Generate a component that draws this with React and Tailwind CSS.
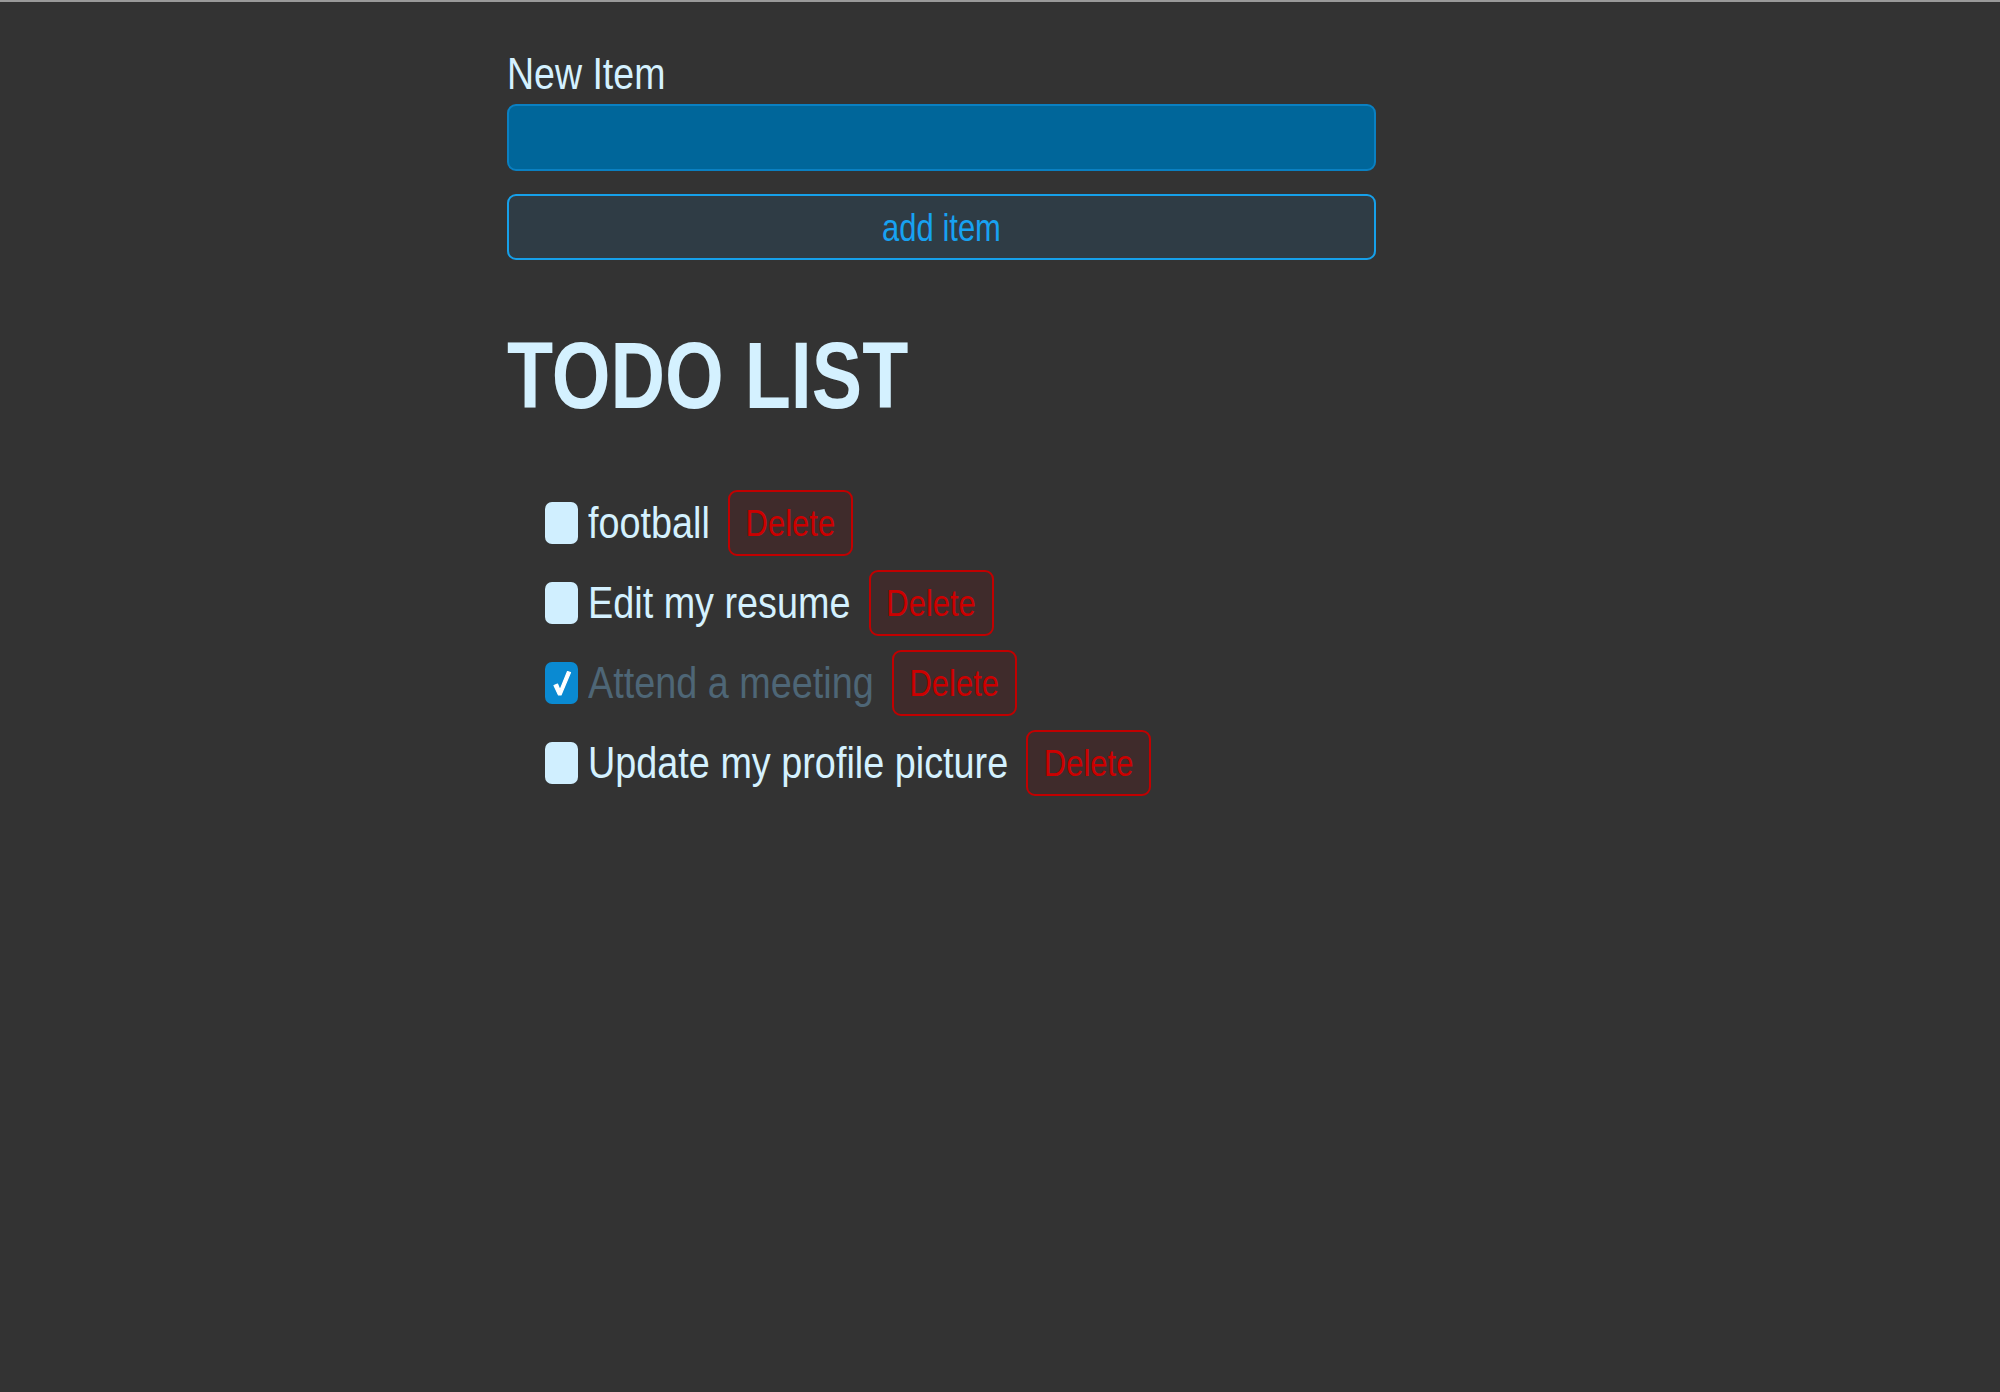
import { useState } from 'react';

const font = { fontFamily: '"Liberation Sans", Arial, sans-serif' };

const initialItems = [
    { id: 1, text: 'football', done: false },
    { id: 2, text: 'Edit my resume', done: false },
    { id: 3, text: 'Attend a meeting', done: true },
    { id: 4, text: 'Update my profile picture', done: false },
];

const App = () => {
    const [items, setItems] = useState(initialItems);
    const [newItem, setNewItem] = useState('');

    const addItem = () => {
        if (!newItem.trim()) return;
        setItems([...items, { id: Date.now(), text: newItem, done: false }]);
        setNewItem('');
    };

    const toggle = (id) => {
        setItems(items.map((it) => (it.id === id ? { ...it, done: !it.done } : it)));
    };

    const remove = (id) => {
        setItems(items.filter((it) => it.id !== id));
    };

    return (
        <div
            className="min-h-screen bg-[#333333] border-t-2 border-[#9a9a9a] pt-[45px] pl-[507px]"
            style={font}
        >
            <div className="w-[869px]">
                {/* New item form */}
                <label className="block text-[37.5px] leading-[52px] text-[#d4f1ff] mb-[5px] scale-y-[1.2]">New Item</label>
                <input
                    type="text"
                    value={newItem}
                    onChange={(e) => setNewItem(e.target.value)}
                    className="block w-full h-[67px] px-4 text-[32px] text-[#d4f1ff] bg-[#00669a] border-2 border-[#0a80c2] rounded-[9px] outline-none"
                />
                <button
                    onClick={addItem}
                    className="mt-[23px] block w-full h-[66px] text-[31px] leading-none text-[#17a2f2] bg-[#2f3c45] border-2 border-[#16a0ea] rounded-[9px]"
                >
                    <span className="inline-block scale-y-[1.25]">add item</span>
                </button>

                {/* List */}
                <h1 className="mt-[65px] text-[75.5px] leading-[100px] font-bold text-[#d4f1ff] scale-y-[1.26]">TODO LIST</h1>

                <ul className="mt-[65px] pl-[38px] flex flex-col gap-[14px]">
                    {items.map((item) => (
                        <li key={item.id} className="flex items-center h-[66px]">
                            <button
                                onClick={() => toggle(item.id)}
                                className={
                                    item.done
                                        ? 'w-[33px] h-[42px] rounded-[7px] bg-[#0a8ad2] flex items-center justify-center'
                                        : 'w-[33px] h-[42px] rounded-[7px] bg-[#d0efff]'
                                }
                            >
                                {item.done && (
                                    <svg width="22" height="30" viewBox="0 0 22 30">
                                        <path
                                            d="M3 17.5 L6.5 16 L9 22 L16.5 3.5 L19.5 4.5 L10 27 L7.5 27 Z"
                                            fill="#ffffff"
                                            stroke="#ffffff"
                                            strokeWidth="1.2"
                                            strokeLinejoin="round"
                                        />
                                    </svg>
                                )}
                            </button>
                            <span
                                className={
                                    item.done
                                        ? 'ml-[10px] inline-block text-[37.8px] scale-y-[1.19] text-[#4e6676]'
                                        : 'ml-[10px] inline-block text-[37.8px] scale-y-[1.19] text-[#d4f1ff]'
                                }
                            >
                                {item.text}
                            </span>
                            <button
                                onClick={() => remove(item.id)}
                                className="ml-[18px] h-[66px] w-[125px] text-[31px] leading-none text-[#cc0000] bg-[#3f2b2b] border-2 border-[#c20000] rounded-[9px]"
                            >
                                <span className="inline-block scale-y-[1.22]">Delete</span>
                            </button>
                        </li>
                    ))}
                </ul>
            </div>
        </div>
    );
};

export default App;
